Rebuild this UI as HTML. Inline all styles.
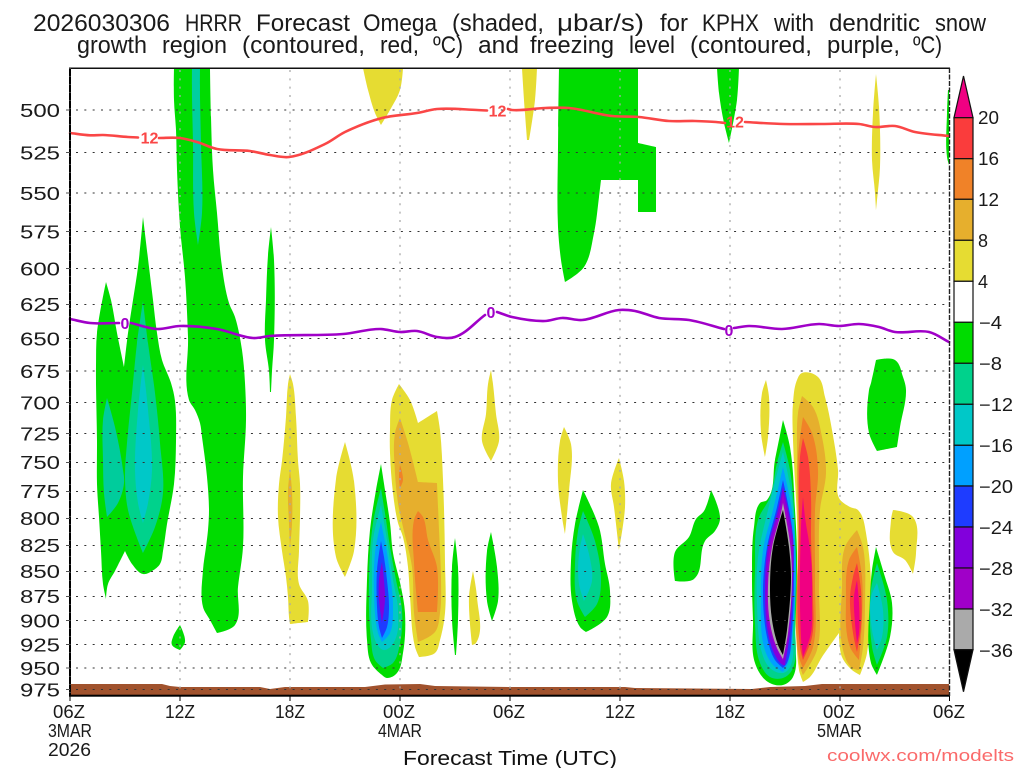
<!DOCTYPE html>
<html><head><meta charset="utf-8"><title>HRRR Forecast Omega KPHX</title>
<style>html,body{margin:0;padding:0;background:#fff;width:1024px;height:768px;overflow:hidden}svg{display:block}text{font-family:"Liberation Sans",sans-serif;fill:#1a1a1a}
.t{font-size:24px}.y{font-size:18px;fill:#3a3a3a}.x{font-size:18px;fill:#111}.c{font-size:18px;fill:#111}</style></head><body>
<svg width="1024" height="768" viewBox="0 0 1024 768" xmlns="http://www.w3.org/2000/svg">
<rect width="1024" height="768" fill="#fff"/>
<g class="t">
<text x="33" y="31" textLength="137" lengthAdjust="spacingAndGlyphs">2026030306</text>
<text x="185" y="31" textLength="57" lengthAdjust="spacingAndGlyphs">HRRR</text>
<text x="256" y="31" textLength="94" lengthAdjust="spacingAndGlyphs">Forecast</text>
<text x="363" y="31" textLength="74" lengthAdjust="spacingAndGlyphs">Omega</text>
<text x="452" y="31" textLength="92" lengthAdjust="spacingAndGlyphs">(shaded,</text>
<text x="557" y="31" textLength="87" lengthAdjust="spacingAndGlyphs">μbar/s)</text>
<text x="660" y="31" textLength="28" lengthAdjust="spacingAndGlyphs">for</text>
<text x="702" y="31" textLength="57" lengthAdjust="spacingAndGlyphs">KPHX</text>
<text x="774" y="31" textLength="40" lengthAdjust="spacingAndGlyphs">with</text>
<text x="829" y="31" textLength="91" lengthAdjust="spacingAndGlyphs">dendritic</text>
<text x="935" y="31" textLength="51" lengthAdjust="spacingAndGlyphs">snow</text>
<text x="77" y="53" textLength="70" lengthAdjust="spacingAndGlyphs">growth</text>
<text x="162" y="53" textLength="65" lengthAdjust="spacingAndGlyphs">region</text>
<text x="242" y="53" textLength="123" lengthAdjust="spacingAndGlyphs">(contoured,</text>
<text x="380" y="53" textLength="39" lengthAdjust="spacingAndGlyphs">red,</text>
<text x="433" y="53" textLength="30" lengthAdjust="spacingAndGlyphs">ºC)</text>
<text x="478" y="53" textLength="41" lengthAdjust="spacingAndGlyphs">and</text>
<text x="530" y="53" textLength="84" lengthAdjust="spacingAndGlyphs">freezing</text>
<text x="629" y="53" textLength="46" lengthAdjust="spacingAndGlyphs">level</text>
<text x="690" y="53" textLength="122" lengthAdjust="spacingAndGlyphs">(contoured,</text>
<text x="827" y="53" textLength="73" lengthAdjust="spacingAndGlyphs">purple,</text>
<text x="913" y="53" textLength="29" lengthAdjust="spacingAndGlyphs">ºC)</text>
</g>

<!-- terrain -->
<polygon fill="#a0522d" points="70,684 162,684 170,686 180,687 260,687 270,689 285,687 365,687 385,684.5 420,684 435,686 510,687 625,687 635,688 752,689 770,687 805,686 822,684 949,684 949,695 70,695"/>

<g id="shade">
<polygon fill="#00dc00" points="174,68 174,100 176,130 177,170 180,227 185,277 188,337 189,400 195,410 200,423 202,437 207,477 209,510 208,530 206,547 203,570 203,607 210,620 217,633 235,625 238,587 243,547 243,477 246,420 245,383 242,350 235,317 229,303 222,267 217,213 213,170 211,117 210,68"/>
<polygon fill="#00cfa0" points="192,68 200,68 200,97 201,143 202,213 198,245 194,213 193,143 192,97"/>
<polygon fill="#00dc00" points="106,282 111,300 117,333 124,367 128,333 133,300 138,267 143,217 149,267 153,300 157,333 162,360 171,383 175,401 176,441 174,484 167,524 163,551 160,564 152,571 143,574 132,564 125,551 115,571 108,584 106,599 103,584 101,551 99,517 97,484 97,441 96,384 96,367 97,333"/>
<polygon fill="#00d28c" points="143,301 148,343 155,393 160,443 163,493 155,527 143,553 128,510 125,477 127,443 132,393 137,343"/>
<polygon fill="#00c8c8" points="143,365 148,410 152,470 148,503 143,523 138,503 135,470 138,410"/>
<polygon fill="#00cc9c" points="107,398 115,427 123,470 124,483 118,503 107,517 104,493 103,460 103,420"/>
<polygon fill="#00dc00" points="180,625 185,642 180,650 172,645 173,637"/>
<polygon fill="#00dc00" points="271,227 274,260 274,340 272,371 271,392 270,392 269,371 265,340 266,300 268,255"/>
<polygon fill="#e6dc32" points="363,68 403,68 400,90 390,110 381,125 375,113 368,90"/>
<polygon fill="#e6dc32" points="290,374 293,384 296,417 298,461 300,484 300,517 299,551 299,584 308,601 308,622 290,624 289,617 288,597 286,577 282,551 278,517 279,484 282,461 286,417 288,384"/>
<polygon fill="#e6af2d" points="290,470 292,491 292,524 290,547 289,524 288,491"/>
<polygon fill="#e6dc32" points="345,442 354,481 354,551 345,577 336,557 336,479"/>

<polygon fill="#00dc00" points="381,464 385,490 390,523 393,553 401,587 405,613 403,653 397,673 387,678 382,675 371,663 367,640 367,580 370,530 376,490"/>
<polygon fill="#00d28c" points="381,488 386,520 390,547 396,580 402,610 400,643 393,663 383,668 375,660 371,640 369,580 373,523"/>
<polygon fill="#00c8c8" points="381,505 387,540 393,580 398,610 395,640 385,650 380,648 373,633 372,587 373,540"/>
<polygon fill="#00a0ff" points="381,522 386,547 390,573 393,607 390,633 382,642 378,633 374,593 375,553"/>
<polygon fill="#1e3cff" points="381,541 384,557 387,580 389,607 387,627 382,638 379,627 377,607 377,570"/>
<polygon fill="#8200dc" points="382,562 384,580 385,600 382,623 379,600 379,580"/>

<polygon fill="#e6dc32" points="399,384 410,400 418,423 437,411 440,430 443,480 445,563 445,613 440,640 435,653 419,657 415,647 410,597 408,567 403,537 398,523 393,493 390,453 390,430 392,400"/>
<polygon fill="#e6af2d" points="400,418 408,443 418,482 437,483 439,530 441,580 440,613 435,632 418,642 414,613 412,567 403,527 398,503 395,473 395,433"/>
<polygon fill="#f08228" points="400,465 403,480 400,488 399,477"/>
<polygon fill="#f08228" points="418,511 423,517 428,540 437,567 437,612 418,612 414,563 414,520"/>
<polygon fill="#00dc00" points="455,538 458,567 458,620 456,655 455,655 452,620 452,567"/>
<polygon fill="#e6dc32" points="473,571 477,597 476,643 472,645 469,597"/>
<polygon fill="#00dc00" points="491,532 497,567 498,601 492,621 487,601 487,551"/>
<polygon fill="#e6dc32" points="491,370 493,384 496,414 499,441 491,461 482,441 486,414 488,384"/>

<polygon fill="#e6dc32" points="522,68 537,68 535,100 529,140 527,140 525,113"/>
<polygon fill="#00dc00" points="559,68 638,68 638,143 656,147 656,212 638,212 638,180 601,180 599,197 594,233 584,267 565,282 561,260 558,227 558,147"/>
<polygon fill="#00dc00" points="717,68 739,68 737,100 729,143 724,123 719,93"/>
<polygon fill="#e6dc32" points="876,74 879,107 880,167 877,200 876,210 875,193 872,160 873,113"/>
<polygon fill="#00dc00" points="948,90 949,90 949,165 947,157 947,113"/>

<polygon fill="#e6dc32" points="564,427 571,444 569,491 565,534 562,517 558,481 560,441"/>
<polygon fill="#e6dc32" points="619,458 624,481 625,507 619,550 614,507 611,484"/>
<polygon fill="#00dc00" points="583,490 599,527 605,564 610,591 607,617 586,632 580,627 572,601 571,561 575,524"/>
<polygon fill="#00d28c" points="583,511 595,541 601,581 597,604 585,617 577,601 575,564 578,531"/>
<polygon fill="#00c8c8" points="583,534 589,554 592,581 584,601 579,584 579,554"/>
<polygon fill="#00dc00" points="711,490 720,519 715,531 705,541 694,579 675,581 675,552 689,537 696,519 704,511"/>
<polygon fill="#e6dc32" points="766,380 769,397 768,437 765,457 761,433 762,393"/>

<polygon fill="#e6dc32" points="802,373 818,377 825,397 832,430 838,470 839,498 850,507 858,510 866,533 867,653 860,675 852,670 842,657 839,633 822,657 810,677 803,682 799,670 798,587 797,520 793,440 793,403 797,380"/>
<polygon fill="#e6af2d" points="802,396 813,407 822,437 826,473 820,510 819,587 817,650 803,675 799,663 798,537 797,450 798,413"/>
<polygon fill="#f08228" points="803,417 812,433 818,470 815,510 815,583 813,647 803,668 799,657 799,537 798,457"/>
<polygon fill="#fa3c3c" points="803,438 808,457 811,497 811,537 813,597 812,637 803,660 800,647 799,520 800,457"/>
<polygon fill="#f00082" points="803,497 805,517 811,557 812,603 811,633 803,657 801,637 801,527"/>

<polygon fill="#00dc00" points="783,420 790,447 795,510 797,553 795,637 793,677 783,685 768,682 755,663 753,620 752,577 754,527 760,503 767,500 775,460"/>
<polygon fill="#00d28c" points="783,442 790,470 795,530 795,623 792,670 783,678 770,677 760,663 755,623 755,570 758,520 770,497 777,463"/>
<polygon fill="#00c8c8" points="783,452 792,497 795,557 793,630 790,667 783,673 770,668 762,653 757,603 758,557 768,510 778,470"/>
<polygon fill="#00a0ff" points="783,467 792,510 796,563 793,630 788,663 783,672 773,665 764,647 761,597 763,550 773,510"/>
<polygon fill="#1e3cff" points="783,480 792,527 794,570 792,630 787,663 783,668 775,660 767,637 763,590 767,547 777,507"/>
<polygon fill="#8200dc" points="783,487 793,537 793,580 790,633 785,665 783,665 776,657 768,633 765,590 768,547 778,510"/>
<polygon fill="#a000c8" points="783,493 792,543 792,583 788,637 783,661 777,650 769,627 767,587 770,547 780,510"/>
<polygon fill="#aaaaaa" points="783,503 790,543 792,577 788,633 783,659 777,648 770,623 768,587 772,547 781,513"/>
<polygon fill="#000" points="783,510 789,547 791,577 787,630 783,655 778,645 772,620 770,587 773,547"/>

<polygon fill="#e6af2d" points="857,530 863,547 865,603 863,647 859,670 852,668 843,650 842,587 845,547"/>
<polygon fill="#f08228" points="857,547 862,577 862,620 859,660 850,647 846,597 849,560"/>
<polygon fill="#fa3c3c" points="857,563 861,590 861,627 857,652 853,633 850,597 853,577"/>
<polygon fill="#f00082" points="857,580 859,603 859,633 857,643 855,623 854,597"/>

<polygon fill="#00dc00" points="876,547 885,577 892,603 890,637 877,675 871,663 870,597 872,570"/>
<polygon fill="#00d28c" points="877,563 887,600 887,637 877,665 872,647 871,590"/>
<polygon fill="#00c8c8" points="877,583 883,610 882,637 877,650 872,630 871,597"/>
<polygon fill="#00dc00" points="876,360 895,360 903,377 906,390 900,427 897,447 877,451 869,433 869,390 871,383"/>
<polygon fill="#e6dc32" points="893,510 913,517 916,553 913,574 905,560 893,552 891,520"/>
</g>

<!-- grid -->
<g stroke="#aaa" stroke-width="1.3" stroke-dasharray="2 6.33" fill="none">
<path d="M180 70V695M290 70V695M400 70V695M510 70V695M620 70V695M730 70V695M840 70V695"/>
</g>
<g stroke="#333" stroke-width="1" stroke-dasharray="2 6.33" fill="none">
<path d="M76 110H949M76 152.5H949M76 193H949M76 231.5H949M76 268.5H949M76 304.5H949M76 338.5H949M76 371H949M76 402.5H949M76 433.5H949M76 462.5H949M76 491.5H949M76 518.5H949M76 545.5H949M76 571.5H949M76 596.5H949M76 620.5H949M76 644.5H949M76 668H949M76 689.5H949"/>
</g>

<!-- contours -->
<g id="cont" fill="none" stroke-width="2.6" stroke-linejoin="round" stroke-linecap="round">
<polyline stroke="#fa4646" points="70,133 90,135.3 103,135 128,137 138,137.5"/>
<polyline stroke="#fa4646" points="159,138 180,138 197,142 217,149 250,151 270,155 289,157 325,144 345,132 382,118 417,113 437,109 477,110 487,110.5"/>
<polyline stroke="#fa4646" points="508,109 512,110 545,108 569,108 612,116 639,117 669,121 695,121 716,122 725,123"/>
<polyline stroke="#fa4646" points="745,122 784,124 822,124 859,124 875,127 895,126 915,132 949,136"/>
<polyline stroke="#a000c8" points="70,319 90,323 119,323"/>
<polyline stroke="#a000c8" points="131,323 157,329 180,326 217,329 253,338 270,336 343,334 380,329 400,332 417,331 437,337 455,337 485,315"/>
<polyline stroke="#a000c8" points="497,312 512,317 545,321 562,318 582,320 619,310 635,311 659,318 689,320 724,329"/>
<polyline stroke="#a000c8" points="734,328 749,326 782,329 819,324 839,326 859,324 879,327 895,332 929,332 949,342"/>
</g>
<g font-weight="700" font-size="16" text-anchor="middle">
<text x="149.5" y="143.5" style="fill:#fa4646">12</text>
<text x="497.5" y="116.5" style="fill:#fa4646">12</text>
<text x="735" y="127.5" style="fill:#fa4646">12</text>
<text x="125" y="329" style="fill:#a000c8">0</text>
<text x="491" y="318" style="fill:#a000c8">0</text>
<text x="729" y="336" style="fill:#a000c8">0</text>
</g>

<!-- axes -->
<rect x="69" y="67.5" width="881" height="1.5" fill="#111"/>
<rect x="69" y="694.7" width="881" height="2" fill="#000"/>
<path d="M70 68V696" stroke="#000" stroke-width="2" fill="none"/>
<path d="M70 68V696" stroke="#777" stroke-width="1" stroke-dasharray="1 7" fill="none"/>
<path d="M949.5 68V696" stroke="#222" stroke-width="1.4" stroke-dasharray="5 1.5" fill="none"/>
<path d="M66 110H70M66 152.5H70M66 193H70M66 231.5H70M66 268.5H70M66 304.5H70M66 338.5H70M66 371H70M66 402.5H70M66 433.5H70M66 462.5H70M66 491.5H70M66 518.5H70M66 545.5H70M66 571.5H70M66 596.5H70M66 620.5H70M66 644.5H70M66 668H70M66 689.5H70" stroke="#555" stroke-width="1" fill="none"/>
<path d="M70 696V701M180 696V701M290 696V701M400 696V701M510 696V701M620 696V701M730 696V701M840 696V701M949.5 696V701" stroke="#000" stroke-width="1" fill="none"/>

<!-- y labels -->
<g class="y">
<text x="20" y="117" textLength="40" lengthAdjust="spacingAndGlyphs">500</text>
<text x="20" y="159.5" textLength="40" lengthAdjust="spacingAndGlyphs">525</text>
<text x="20" y="200" textLength="40" lengthAdjust="spacingAndGlyphs">550</text>
<text x="20" y="238.5" textLength="40" lengthAdjust="spacingAndGlyphs">575</text>
<text x="20" y="275.5" textLength="40" lengthAdjust="spacingAndGlyphs">600</text>
<text x="20" y="311" textLength="40" lengthAdjust="spacingAndGlyphs">625</text>
<text x="20" y="345.5" textLength="40" lengthAdjust="spacingAndGlyphs">650</text>
<text x="20" y="378" textLength="40" lengthAdjust="spacingAndGlyphs">675</text>
<text x="20" y="409.5" textLength="40" lengthAdjust="spacingAndGlyphs">700</text>
<text x="20" y="440.5" textLength="40" lengthAdjust="spacingAndGlyphs">725</text>
<text x="20" y="469" textLength="40" lengthAdjust="spacingAndGlyphs">750</text>
<text x="20" y="498" textLength="40" lengthAdjust="spacingAndGlyphs">775</text>
<text x="20" y="525" textLength="40" lengthAdjust="spacingAndGlyphs">800</text>
<text x="20" y="552" textLength="40" lengthAdjust="spacingAndGlyphs">825</text>
<text x="20" y="578" textLength="40" lengthAdjust="spacingAndGlyphs">850</text>
<text x="20" y="603" textLength="40" lengthAdjust="spacingAndGlyphs">875</text>
<text x="20" y="627.5" textLength="40" lengthAdjust="spacingAndGlyphs">900</text>
<text x="20" y="651.5" textLength="40" lengthAdjust="spacingAndGlyphs">925</text>
<text x="20" y="675" textLength="40" lengthAdjust="spacingAndGlyphs">950</text>
<text x="20" y="696.5" textLength="40" lengthAdjust="spacingAndGlyphs">975</text>
</g>

<!-- x labels -->
<g class="x">
<text x="53" y="718" textLength="32" lengthAdjust="spacingAndGlyphs">06Z</text>
<text x="165" y="718" textLength="30" lengthAdjust="spacingAndGlyphs">12Z</text>
<text x="275" y="718" textLength="30" lengthAdjust="spacingAndGlyphs">18Z</text>
<text x="383" y="718" textLength="32" lengthAdjust="spacingAndGlyphs">00Z</text>
<text x="493" y="718" textLength="32" lengthAdjust="spacingAndGlyphs">06Z</text>
<text x="605" y="718" textLength="30" lengthAdjust="spacingAndGlyphs">12Z</text>
<text x="715" y="718" textLength="30" lengthAdjust="spacingAndGlyphs">18Z</text>
<text x="823" y="718" textLength="32" lengthAdjust="spacingAndGlyphs">00Z</text>
<text x="933" y="718" textLength="32" lengthAdjust="spacingAndGlyphs">06Z</text>
<text x="48" y="737" textLength="44" lengthAdjust="spacingAndGlyphs">3MAR</text>
<text x="48" y="756" textLength="43" lengthAdjust="spacingAndGlyphs">2026</text>
<text x="378" y="737" textLength="44" lengthAdjust="spacingAndGlyphs">4MAR</text>
<text x="817" y="737" textLength="45" lengthAdjust="spacingAndGlyphs">5MAR</text>
</g>
<text x="403" y="765" font-size="20" textLength="214" lengthAdjust="spacingAndGlyphs" style="fill:#111">Forecast Time (UTC)</text>
<text x="827" y="761" font-size="17" textLength="187" lengthAdjust="spacingAndGlyphs" style="fill:#fa6a6a">coolwx.com/modelts</text>

<!-- colorbar -->
<g stroke="#111" stroke-width="1.2">
<polygon fill="#f00082" points="963.5,76 973,117.7 954,117.7"/>
<rect x="954" y="117.7" width="19" height="41" fill="#fa3c3c"/>
<rect x="954" y="158.7" width="19" height="40.6" fill="#f08228"/>
<rect x="954" y="199.3" width="19" height="41" fill="#e6af2d"/>
<rect x="954" y="240.3" width="19" height="41" fill="#e6dc32"/>
<rect x="954" y="281.3" width="19" height="41" fill="#fff"/>
<rect x="954" y="322.3" width="19" height="41" fill="#00dc00"/>
<rect x="954" y="363.3" width="19" height="41" fill="#00d28c"/>
<rect x="954" y="404.3" width="19" height="41" fill="#00c8c8"/>
<rect x="954" y="445.3" width="19" height="40.7" fill="#00a0ff"/>
<rect x="954" y="486" width="19" height="41" fill="#1e3cff"/>
<rect x="954" y="527" width="19" height="41" fill="#8200dc"/>
<rect x="954" y="568" width="19" height="41" fill="#a000c8"/>
<rect x="954" y="609" width="19" height="40.7" fill="#aaaaaa"/>
<polygon fill="#000" points="954,649.7 973,649.7 963.5,691.7"/>
</g>
<g class="c">
<text x="978" y="124" textLength="21" lengthAdjust="spacingAndGlyphs">20</text>
<text x="978" y="165" textLength="21" lengthAdjust="spacingAndGlyphs">16</text>
<text x="978" y="206" textLength="21" lengthAdjust="spacingAndGlyphs">12</text>
<text x="978" y="247" textLength="10" lengthAdjust="spacingAndGlyphs">8</text>
<text x="978" y="288" textLength="10" lengthAdjust="spacingAndGlyphs">4</text>
<text x="979" y="329" textLength="23" lengthAdjust="spacingAndGlyphs">−4</text>
<text x="979" y="370" textLength="23" lengthAdjust="spacingAndGlyphs">−8</text>
<text x="979" y="411" textLength="34" lengthAdjust="spacingAndGlyphs">−12</text>
<text x="979" y="452" textLength="34" lengthAdjust="spacingAndGlyphs">−16</text>
<text x="979" y="493" textLength="34" lengthAdjust="spacingAndGlyphs">−20</text>
<text x="979" y="534" textLength="34" lengthAdjust="spacingAndGlyphs">−24</text>
<text x="979" y="575" textLength="34" lengthAdjust="spacingAndGlyphs">−28</text>
<text x="979" y="616" textLength="34" lengthAdjust="spacingAndGlyphs">−32</text>
<text x="979" y="657" textLength="34" lengthAdjust="spacingAndGlyphs">−36</text>
</g>
</svg>
<script>
(function(){
var NS='http://www.w3.org/2000/svg';
function unit(x,y){var l=Math.hypot(x,y)||1;return [x/l,y/l];}
function smooth(el,closed){
  var s=el.getAttribute('points').trim().split(/\s+/).map(function(a){return a.split(',').map(Number);});
  var n=s.length;
  function tan(i){
    if(!closed&&(i===0||i===n-1)){var q=i===0?s[1]:s[n-2];var u=unit(q[0]-s[i][0],q[1]-s[i][1]);return i===0?u:[-u[0],-u[1]];}
    var a=s[(i-1+n)%n],b=s[i],c=s[(i+1)%n];
    var v1=unit(b[0]-a[0],b[1]-a[1]),v2=unit(c[0]-b[0],c[1]-b[1]);
    if(v1[0]*v2[0]+v1[1]*v2[1]<0.35)return [0,0];
    return unit(v1[0]+v2[0],v1[1]+v2[1]);
  }
  var d='M'+s[0][0]+' '+s[0][1],m=closed?n:n-1;
  for(var i=0;i<m;i++){
    var a=s[i],b=s[(i+1)%n],L=Math.hypot(b[0]-a[0],b[1]-a[1])/3,ta=tan(i),tb=tan((i+1)%n);
    d+='C'+(a[0]+ta[0]*L).toFixed(1)+' '+(a[1]+ta[1]*L).toFixed(1)+' '+(b[0]-tb[0]*L).toFixed(1)+' '+(b[1]-tb[1]*L).toFixed(1)+' '+b[0]+' '+b[1];
  }
  if(closed)d+='Z';
  var p=document.createElementNS(NS,'path');
  p.setAttribute('d',d);
  if(el.getAttribute('fill'))p.setAttribute('fill',el.getAttribute('fill'));
  if(el.getAttribute('stroke'))p.setAttribute('stroke',el.getAttribute('stroke'));
  el.parentNode.replaceChild(p,el);
}
[].slice.call(document.querySelectorAll('#shade polygon')).forEach(function(e){smooth(e,true);});
[].slice.call(document.querySelectorAll('#cont polyline')).forEach(function(e){smooth(e,false);});
})();
</script>
</body></html>
